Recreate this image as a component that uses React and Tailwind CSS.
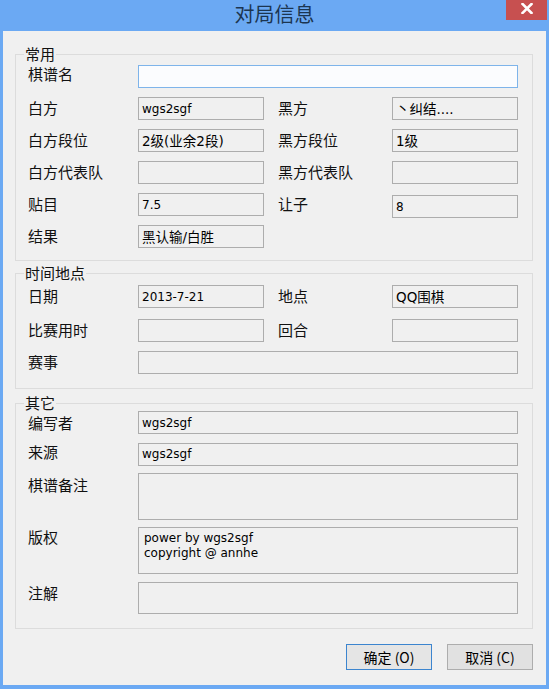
import React from 'react';

const cjk = "font-['Noto_Sans_CJK_SC',sans-serif]";
const mono = "font-['DejaVu_Sans','Noto_Sans_CJK_SC',sans-serif]";

const Label = ({ children, w = 'w-[110px]', className = '' }) => (
  <div className={`${w} shrink-0 text-[15px] leading-[20px] text-[#111] ${cjk} ${className}`}>
    {children}
  </div>
);

const Box = ({ value, w = 'w-[126px]', h = 'h-[23px]', active, big, className = '' }) => (
  <div
    className={`${w} ${h} shrink-0 border flex items-center pl-[3px] text-[12px] leading-[14px] text-black whitespace-nowrap overflow-hidden ${mono} ${
      active ? 'border-[#7eb4ea] bg-[#fbfcfe]' : 'border-[#adadad] bg-[#f0f0f0]'
    } ${big ? 'text-[13.5px]' : ''} ${className}`}
  >
    {value}
  </div>
);

const Area = ({ lines = [], h }) => (
  <div
    className={`w-[380px] ${h} shrink-0 border border-[#adadad] bg-[#f0f0f0] pl-[5px] pt-[3px] text-[12px] leading-[15px] text-black ${mono}`}
  >
    {lines.map((l) => (
      <div key={l}>{l}</div>
    ))}
  </div>
);

const Group = ({ title, children, className = '' }) => (
  <fieldset className={`border border-[#dcdcdc] ${className}`}>
    <legend className={`ml-[8px] px-[1px] text-[15px] leading-[16px] text-[#111] ${cjk}`}>
      {title}
    </legend>
    {children}
  </fieldset>
);

const Pair = ({ l1, v1, l2, v2, big1, big2, shift }) => (
  <div className="flex items-center">
    <Label className="mb-[2px]">{l1}</Label>
    <Box value={v1} big={big1} />
    <div className="w-[14px] shrink-0" />
    {l2 && (
      <>
        <Label w="w-[114px]" className="mb-[2px]">{l2}</Label>
        <Box value={v2} big={big2} className={shift ? 'translate-y-[2px]' : ''} />
      </>
    )}
  </div>
);

const Button = ({ children, primary }) => (
  <button
    className={`w-[86px] h-[26px] border text-[14px] leading-[20px] text-black ${cjk} ${
      primary ? 'border-[#3c85cf] bg-[#e5e5e5]' : 'border-[#adadad] bg-[#e1e1e1]'
    }`}
  >
    {children}
  </button>
);

export default function App() {
  return (
    <div className="w-[549px] h-[689px] bg-[#6ba9f3] flex flex-col overflow-hidden">
      <div className="h-[31px] shrink-0 grid grid-cols-[1fr_auto_1fr]">
        <div />
        <div className={`text-[20px] leading-[28px] text-[#1c3550] ${cjk}`}>对局信息</div>
        <div className="flex justify-end pr-[2px]">
          <div className="w-[41px] h-[20px] bg-[#c75050] flex justify-center pt-[3px]">
            <svg width="12" height="11" viewBox="0 0 12 11">
              <path d="M1.5 1 L10.5 10 M10.5 1 L1.5 10" stroke="#fff" strokeWidth="2.6" strokeLinecap="square" />
            </svg>
          </div>
        </div>
      </div>

      <div className="flex-1 mx-[3px] mb-[4px] bg-[#f0f0f0] pl-[12px] pr-[13px] pt-[15px] pb-[14px] flex flex-col">
        <Group title="常用">
          <div className="flex flex-col gap-[9px] pl-[12px] pr-[14px] pt-[2px] pb-[12px]">
            <div className="flex items-center">
              <Label className="mb-[4px]">棋谱名</Label>
              <Box value="" w="w-[380px]" active />
            </div>
            <Pair l1="白方" v1="wgs2sgf" l2="黑方" v2="丶纠结...." big2 />
            <Pair l1="白方段位" v1="2级(业余2段)" big1 l2="黑方段位" v2="1级" big2 />
            <Pair l1="白方代表队" v1="" l2="黑方代表队" v2="" />
            <Pair l1="贴目" v1="7.5" l2="让子" v2="8" shift />
            <Pair l1="结果" v1="黑认输/白胜" big1 />
          </div>
        </Group>

        <Group title="时间地点" className="mt-[4px]">
          <div className="flex flex-col pl-[12px] pr-[14px] pt-[4px] pb-[14px]">
            <Pair l1="日期" v1="2013-7-21" l2="地点" v2="QQ围棋" big2 />
            <div className="mt-[11px]">
              <Pair l1="比赛用时" v1="" l2="回合" v2="" />
            </div>
            <div className="flex items-center mt-[9px]">
              <Label className="mb-[2px]">赛事</Label>
              <Box value="" w="w-[380px]" />
            </div>
          </div>
        </Group>

        <Group title="其它" className="mt-[6px]">
          <div className="flex flex-col pl-[12px] pr-[14px] pt-[0px] pb-[14px]">
            <div className="flex items-center">
              <Label>编写者</Label>
              <Box value="wgs2sgf" w="w-[380px]" />
            </div>
            <div className="flex items-center mt-[8px]">
              <Label className="mb-[4px]">来源</Label>
              <Box value="wgs2sgf" w="w-[380px]" />
            </div>
            <div className="flex items-start mt-[7px]">
              <Label className="pt-[2px]">棋谱备注</Label>
              <Area h="h-[47px]" />
            </div>
            <div className="flex items-start mt-[7px]">
              <Label>版权</Label>
              <Area h="h-[47px]" lines={['power by wgs2sgf', 'copyright @ annhe']} />
            </div>
            <div className="flex items-start mt-[8px]">
              <Label className="pt-[1px]">注解</Label>
              <Area h="h-[32px]" />
            </div>
          </div>
        </Group>

        <div className="flex justify-end gap-[15px] mt-[15px]">
          <Button primary>确定 (O)</Button>
          <Button>取消 (C)</Button>
        </div>
      </div>
    </div>
  );
}
